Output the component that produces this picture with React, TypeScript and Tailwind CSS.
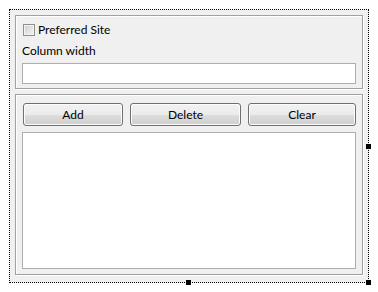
import React from "react";

const font = "font-['Lato',sans-serif] text-[12px] text-black";

const Handle = ({ className }: { className: string }) => (
  <div className={`absolute w-[5px] h-[5px] bg-black ${className}`} />
);

const PushButton = ({ label, width }: { label: string; width: string }) => (
  <button
    className={`${width} h-[23px] pt-[1px] rounded-[3px] border border-[#707070] bg-[linear-gradient(to_bottom,#f2f2f2_0%,#ebebeb_50%,#dddddd_51%,#cfcfcf_100%)] shadow-[inset_0_0_0_1px_#fcfcfc] flex items-center justify-center leading-none ${font}`}
  >
    {label}
  </button>
);

const GroupBox = ({ children, className }: { children: React.ReactNode; className?: string }) => (
  <div
    className={`w-[348px] border border-[#a0a0a0] shadow-[inset_1px_1px_0_#ffffff,1px_1px_0_#ffffff] px-[6px] ${className ?? ""}`}
  >
    {children}
  </div>
);

export default function App() {
  return (
    <div className="w-[378px] h-[292px] bg-white pt-[9px] pl-[9px]">
      <div className="relative w-[360px] h-[274px] border border-dotted border-black bg-[#f0f0f0] pt-[5px] pl-[5px]">
        <GroupBox className="pt-[6px] pb-[4px]">
          <label className={`flex items-center h-[16px] gap-[3px] pl-[1px] ${font}`}>
            <span className="w-[12px] h-[12px] border border-[#8e8f8f] bg-[linear-gradient(135deg,#c9cdd2_0%,#e6e6e6_60%,#f4f4f4_100%)] shadow-[inset_0_0_0_1px_#f4f4f4]" />
            <span>Preferred Site</span>
          </label>
          <div className={`h-[16px] mt-[5px] flex items-center ${font}`}>Column width</div>
          <div className="mt-[4px] w-[334px] h-[21px] border border-[#abadb3] bg-white" />
        </GroupBox>

        <GroupBox className="mt-[5px] pt-[8px] pb-[5px]">
          <div className="flex gap-[7px] pl-[1px]">
            <PushButton label="Add" width="w-[100px]" />
            <PushButton label="Delete" width="w-[111px]" />
            <PushButton label="Clear" width="w-[108px]" />
          </div>
          <div className="mt-[6px] w-[334px] h-[137px] border border-[#abadb3] bg-white" />
        </GroupBox>

        <Handle className="right-[-3px] top-[134px]" />
        <Handle className="left-[176px] bottom-[-3px]" />
        <Handle className="right-[-3px] bottom-[-3px]" />
      </div>
    </div>
  );
}
